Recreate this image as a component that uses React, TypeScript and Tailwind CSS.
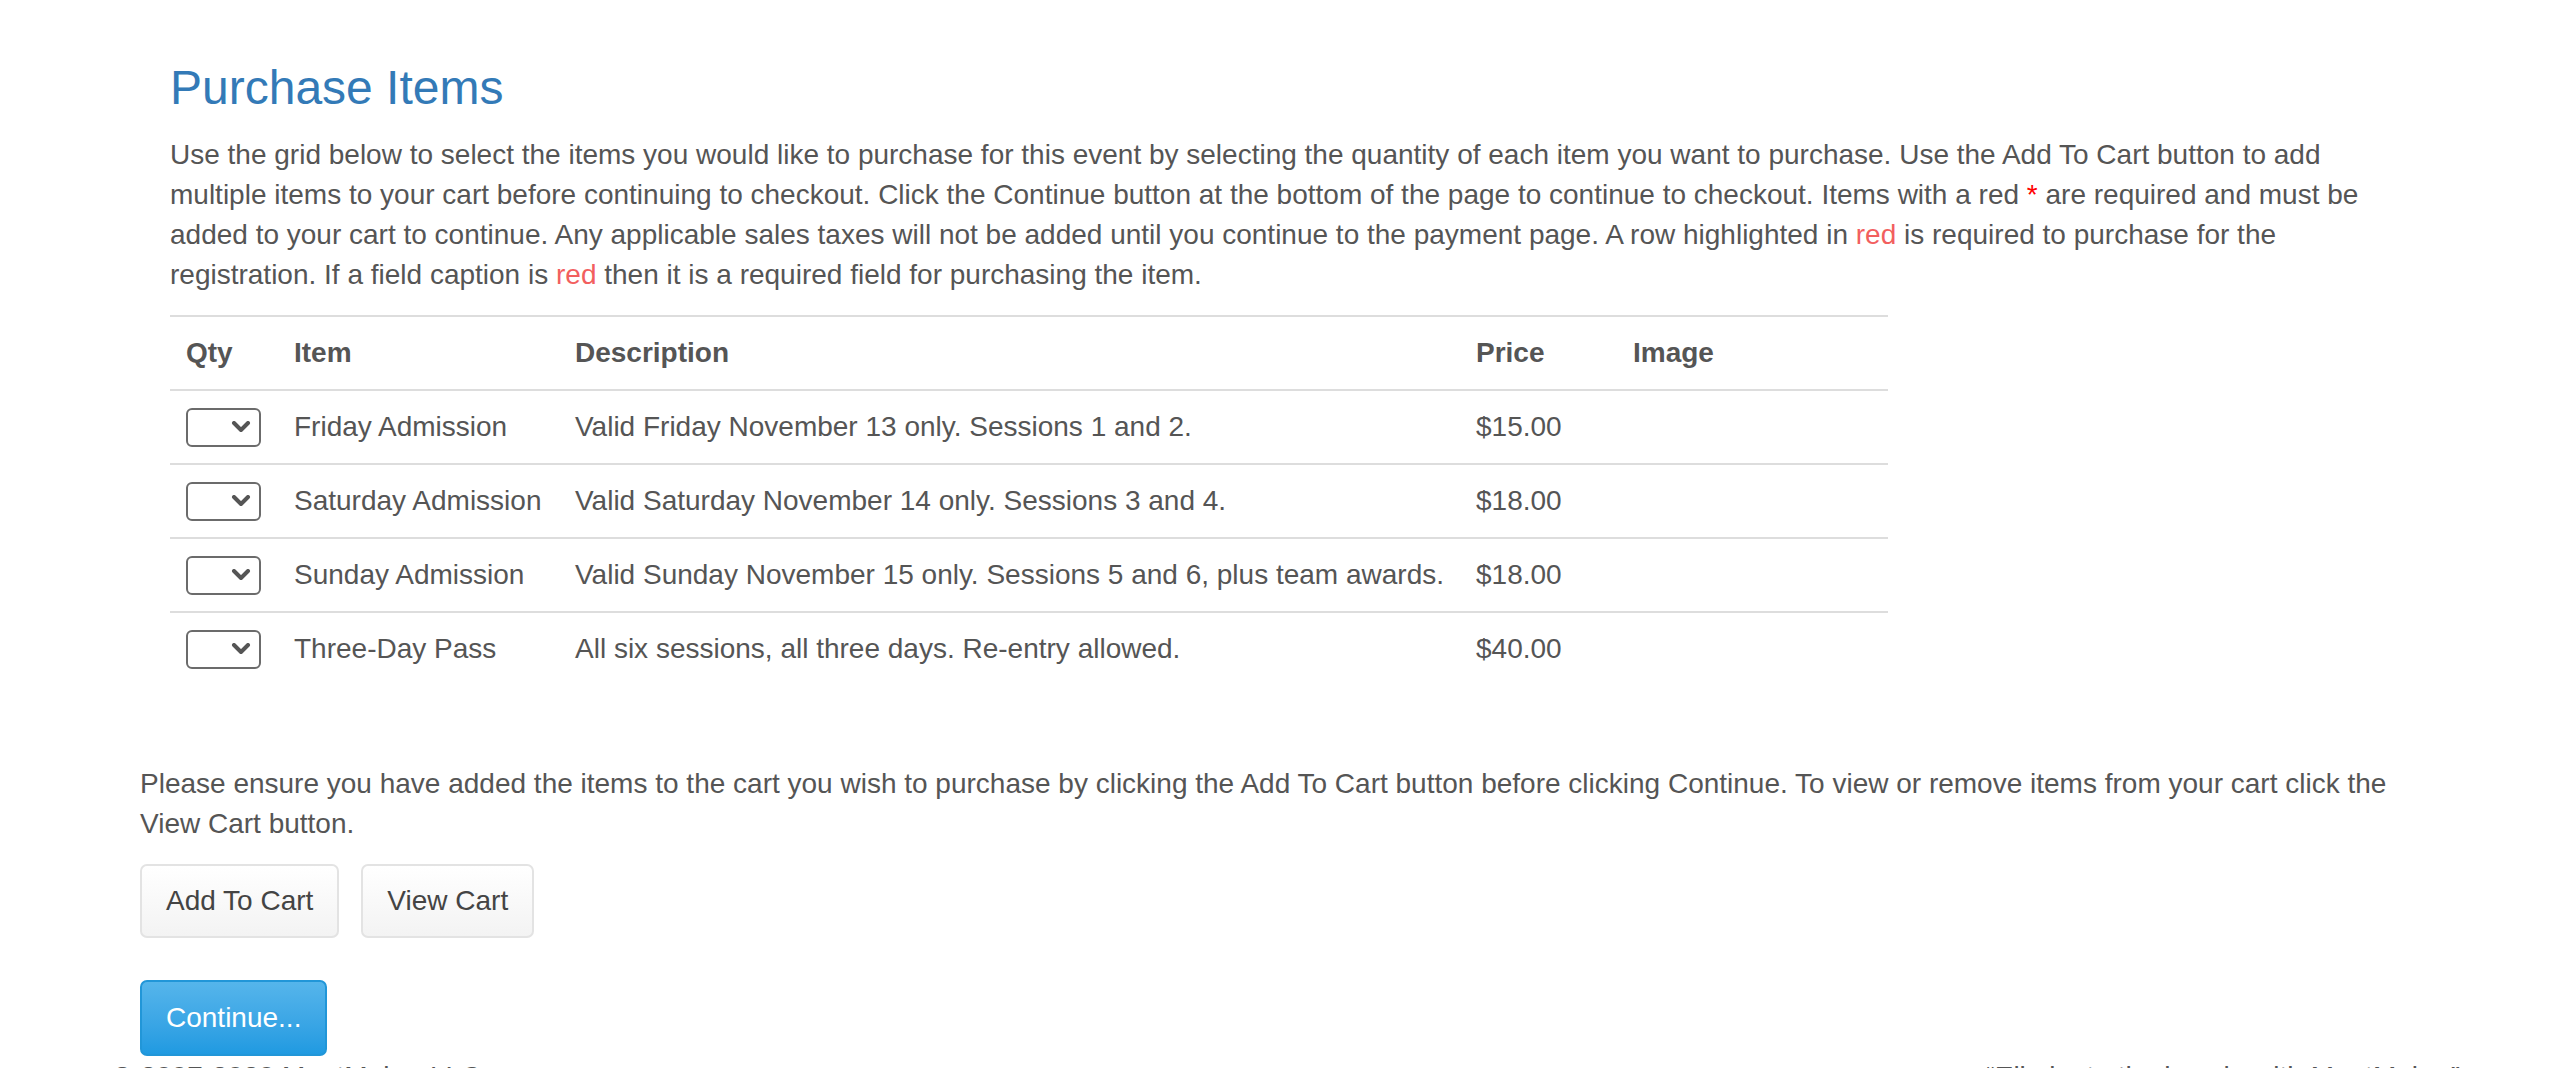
import React from 'react'

const items = [
  { name: 'Friday Admission', desc: 'Valid Friday November 13 only. Sessions 1 and 2.', price: '$15.00' },
  { name: 'Saturday Admission', desc: 'Valid Saturday November 14 only. Sessions 3 and 4.', price: '$18.00' },
  { name: 'Sunday Admission', desc: 'Valid Sunday November 15 only. Sessions 5 and 6, plus team awards.', price: '$18.00' },
  { name: 'Three-Day Pass', desc: 'All six sessions, all three days. Re-entry allowed.', price: '$40.00' },
]

function QtySelect() {
  return (
    <div className="flex h-[39px] w-[75px] items-center justify-end rounded-[6px] border-2 border-[#6b6b6b] bg-white pr-[8px]">
      <svg width="20" height="12" viewBox="0 0 20 12" fill="none">
        <polyline points="3,2 10,9 17,2" stroke="#555" strokeWidth="4" strokeLinecap="round" strokeLinejoin="round" />
      </svg>
    </div>
  )
}

export default function App() {
  return (
    <div className="min-h-screen bg-white font-['Liberation_Sans',Arial,sans-serif] text-[28px] leading-[40px] text-[#555]">
      <div className="mx-auto w-[2340px] px-[30px]">
        {/* intro */}
        <div className="px-[30px]">
          <h3 className="pt-[61px] text-[48px] leading-[53px] font-normal text-[#337ab7]">
            Purchase Items
          </h3>
          <p className="mt-[21px]">
            Use the grid below to select the items you would like to purchase for this event by selecting the quantity of each item you want to purchase. Use the Add To Cart button to add multiple items to your cart before continuing to checkout. Click the Continue button at the bottom of the page to continue to checkout. Items with a red <span className="text-[#ff0000]">*</span> are required and must be added to your cart to continue. Any applicable sales taxes will not be added until you continue to the payment page. A row highlighted in <span className="text-[#f25f5f]">red</span> is required to purchase for the registration. If a field caption is <span className="text-[#f25f5f]">red</span> then it is a required field for purchasing the item.
          </p>

          {/* grid */}
          <table className="mt-[20px] w-[1718px] border-collapse text-left">
            <thead>
              <tr>
                <th className="w-[108px] border-y-2 border-[#ddd] px-[16px] py-[16px] font-bold">Qty</th>
                <th className="w-[281px] border-y-2 border-[#ddd] px-[16px] py-[16px] font-bold">Item</th>
                <th className="w-[900px] border-y-2 border-[#ddd] px-[16px] py-[16px] font-bold">Description</th>
                <th className="w-[157px] border-y-2 border-[#ddd] px-[16px] py-[16px] font-bold">Price</th>
                <th className="border-y-2 border-[#ddd] px-[16px] py-[16px] font-bold">Image</th>
              </tr>
            </thead>
            <tbody>
              {items.map((it, i) => (
                <tr key={it.name} className={i > 0 ? 'border-t-2 border-[#ddd]' : ''}>
                  <td className="px-[16px] py-[16px] align-middle"><QtySelect /></td>
                  <td className="px-[16px] py-[16px] align-middle whitespace-nowrap">{it.name}</td>
                  <td className="px-[16px] py-[16px] align-middle whitespace-nowrap">{it.desc}</td>
                  <td className="px-[16px] py-[16px] align-middle">{it.price}</td>
                  <td className="px-[16px] py-[16px] align-middle"></td>
                </tr>
              ))}
            </tbody>
          </table>
        </div>

        <p className="mt-[79px]">
          Please ensure you have added the items to the cart you wish to purchase by clicking the Add To Cart button before clicking Continue. To view or remove items from your cart click the View Cart button.
        </p>

        {/* cart buttons */}
        <div className="mt-[20px] flex gap-[22px]">
          <button className="rounded-[7px] border-2 border-[#e3e3e3] bg-gradient-to-b from-white to-[#f3f3f3] px-[24px] py-[15px] text-[#444]">
            Add To Cart
          </button>
          <button className="rounded-[7px] border-2 border-[#e3e3e3] bg-gradient-to-b from-white to-[#f3f3f3] px-[24px] py-[15px] text-[#444]">
            View Cart
          </button>
        </div>

        <button className="mt-[42px] rounded-[7px] border-2 border-[#2196d8] bg-gradient-to-b from-[#55b5eb] to-[#1f9ae1] px-[24px] py-[16px] text-white">
          Continue...
        </button>
      </div>

      {/* footer */}
      <footer className="mt-[1px] flex justify-between pl-[112px] pr-[100px]">
        <span>© 2007-2020 MeetMaker LLC</span>
        <span>“Eliminate the hassle with MeetMaker”</span>
      </footer>
    </div>
  )
}
